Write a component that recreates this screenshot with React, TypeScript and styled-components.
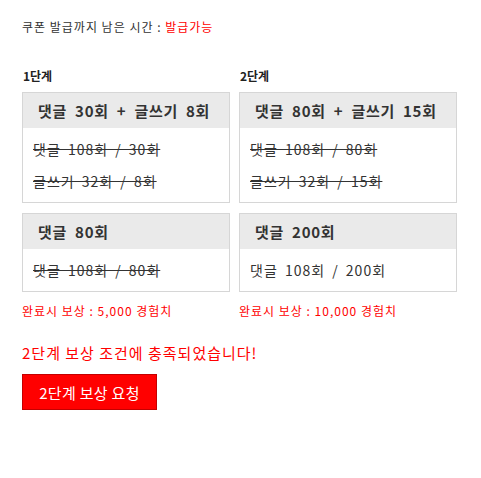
import React from "react";
import styled, { createGlobalStyle } from "styled-components";

const Global = createGlobalStyle`
  body {
    margin: 0;
    background: #fff;
    font-family: "Noto Sans CJK KR", "Noto Sans", sans-serif;
    color: #333;
  }
`;

const Page = styled.div`
  padding: 18px 22px;
`;

const Status = styled.div`
  font-size: 12px;
  line-height: 18px;
  letter-spacing: 1px;
  color: #333;
`;

const Red = styled.span`
  color: #ff0000;
`;

const Stages = styled.div`
  display: flex;
  gap: 9px;
  margin-top: 31px;
  align-items: flex-start;
`;

const Column = styled.div<{ $w: number }>`
  width: ${(p) => p.$w}px;
  display: flex;
  flex-direction: column;
`;

const StageTitle = styled.div`
  font-size: 12px;
  font-weight: bold;
  line-height: 18px;
  color: #222;
  padding-left: 1px;
  margin-bottom: 7px;
`;

const Card = styled.div`
  border: 1px solid #d6d6d6;
  margin-bottom: 10px;
`;

const CardHeader = styled.div`
  background: #eaeaea;
  height: 35px;
  display: flex;
  align-items: center;
  padding: 0 15px;
  font-size: 15px;
  font-weight: 700;
  letter-spacing: 0.7px;
  word-spacing: 4px;
  color: #333;
  white-space: nowrap;
`;

const CardBody = styled.div`
  padding: 5px 10px;
`;

const Line = styled.div<{ $done?: boolean }>`
  font-size: 14px;
  line-height: 32px;
  letter-spacing: 1px;
  word-spacing: 3px;
  color: #333;
  white-space: nowrap;
  text-decoration: ${(p) => (p.$done ? "line-through" : "none")};
`;

const Reward = styled.div`
  font-size: 12px;
  line-height: 18px;
  letter-spacing: 1px;
  color: #ff0000;
`;

const Message = styled.div`
  font-size: 15px;
  line-height: 20px;
  letter-spacing: 1px;
  color: #ff0000;
  margin-top: 23px;
`;

const Button = styled.button`
  margin-top: 11px;
  width: 135px;
  height: 36px;
  background: #ff0000;
  border: 1px solid #c40000;
  color: #fff;
  font-family: inherit;
  font-size: 15px;
  letter-spacing: 0.3px;
  padding: 0;
  cursor: pointer;
`;

type Req = { text: string; done?: boolean };
type Stage = {
  title: string;
  width: number;
  cards: { header: string; lines: Req[] }[];
  reward: string;
};

const stages: Stage[] = [
  {
    title: "1단계",
    width: 208,
    cards: [
      {
        header: "댓글 30회 + 글쓰기 8회",
        lines: [
          { text: "댓글 108회 / 30회", done: true },
          { text: "글쓰기 32회 / 8회", done: true },
        ],
      },
      { header: "댓글 80회", lines: [{ text: "댓글 108회 / 80회", done: true }] },
    ],
    reward: "완료시 보상 : 5,000 경험치",
  },
  {
    title: "2단계",
    width: 218,
    cards: [
      {
        header: "댓글 80회 + 글쓰기 15회",
        lines: [
          { text: "댓글 108회 / 80회", done: true },
          { text: "글쓰기 32회 / 15회", done: true },
        ],
      },
      { header: "댓글 200회", lines: [{ text: "댓글 108회 / 200회" }] },
    ],
    reward: "완료시 보상 : 10,000 경험치",
  },
];

export default function App() {
  return (
    <>
      <Global />
      <Page>
        <Status>
          쿠폰 발급까지 남은 시간 : <Red>발급가능</Red>
        </Status>
        <Stages>
          {stages.map((s) => (
            <Column key={s.title} $w={s.width}>
              <StageTitle>{s.title}</StageTitle>
              {s.cards.map((c) => (
                <Card key={c.header}>
                  <CardHeader>{c.header}</CardHeader>
                  <CardBody>
                    {c.lines.map((l) => (
                      <Line key={l.text} $done={l.done}>
                        {l.text}
                      </Line>
                    ))}
                  </CardBody>
                </Card>
              ))}
              <Reward>{s.reward}</Reward>
            </Column>
          ))}
        </Stages>
        <Message>2단계 보상 조건에 충족되었습니다!</Message>
        <Button>2단계 보상 요청</Button>
      </Page>
    </>
  );
}
